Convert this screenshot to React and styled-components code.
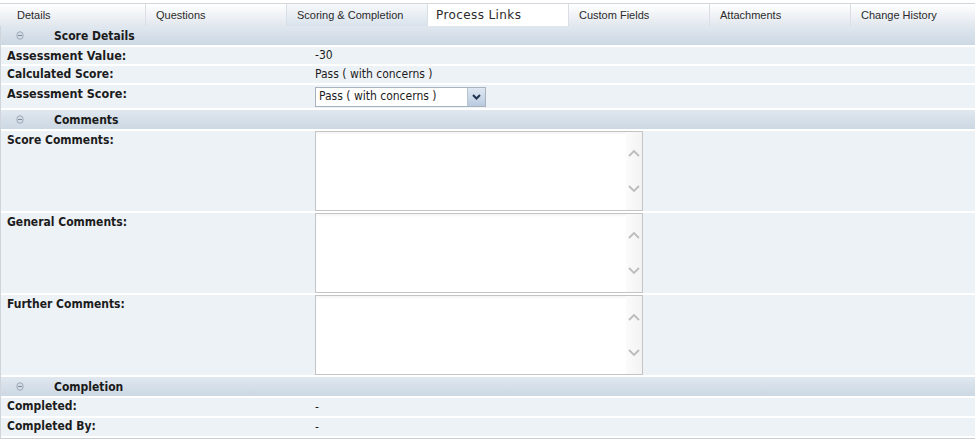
import styled, { createGlobalStyle } from "styled-components";

const GlobalStyle = createGlobalStyle`
  body {
    margin: 0;
    background: #fff;
    font-family: Tahoma, "DejaVu Sans Condensed", "DejaVu Sans", sans-serif;
    color: #1c1c1c;
  }
`;

const tabs = [
  "Details",
  "Questions",
  "Scoring & Completion",
  "Process Links",
  "Custom Fields",
  "Attachments",
  "Change History",
];

const Page = styled.div`
  width: 975px;
  padding-top: 3px;
`;

const TabBar = styled.div`
  display: grid;
  grid-template-columns: 145px repeat(5, 141px) 1fr;
  height: 22px;
  border-top: 1px solid #d3d7db;
`;

const Tab = styled.div`
  display: flex;
  align-items: center;
  padding-left: ${(p) => (p.$first ? "16px" : p.$hover ? "8px" : "10px")};
  border-left: 1px solid ${(p) => (p.$first ? "transparent" : "#d9dfe5")};
  background: ${(p) =>
    p.$active
      ? "linear-gradient(#f7f9fb, #d9e2ec)"
      : p.$hover
      ? "#fff"
      : "linear-gradient(#ffffff, #e1e7ee)"};
  font-family: ${(p) =>
    p.$hover ? 'Tahoma, "DejaVu Sans", sans-serif' : '"Liberation Sans", Arial, sans-serif'};
  font-size: ${(p) => (p.$hover ? "12px" : "11px")};
  letter-spacing: ${(p) => (p.$hover ? "0.4px" : "0")};
  color: #2a2a2a;
  white-space: nowrap;
`;

const Panel = styled.div`
  display: flex;
  flex-direction: column;
  gap: 2px;
  border-left: 1px solid #cfd5db;
  border-bottom: 1px solid #c8ced4;
  padding-bottom: 2px;
`;

const SectionHeader = styled.div`
  height: 19px;
  display: flex;
  align-items: center;
  background: linear-gradient(#e0e7ef, #ccd8e3);
  font-weight: bold;
  font-size: 12px;
  color: #1a1a1a;
`;

const IconWrap = styled.span`
  width: 53px;
  padding-left: 15px;
  box-sizing: border-box;
  display: flex;
  align-items: center;
`;

const Row = styled.div`
  display: grid;
  grid-template-columns: 307px 1fr;
  min-height: ${(p) => p.$h || 17}px;
  background: #edf2f7;
`;

const Label = styled.div`
  padding-left: 6px;
  font-weight: bold;
  font-size: ${(p) => p.$size || 12}px;
  line-height: 17px;
  white-space: nowrap;
  padding-top: ${(p) => p.$top || 0}px;
`;

const Value = styled.div`
  padding-left: 7px;
  font-size: 12px;
  line-height: 17px;
  display: flex;
  align-items: ${(p) => (p.$start ? "flex-start" : "center")};
`;

const Select = styled.div`
  width: 171px;
  height: 20px;
  border: 1px solid #a9b3bd;
  background: #fff;
  display: flex;
  align-items: center;
  justify-content: space-between;
  box-sizing: border-box;
  font-size: 12px;
  padding-left: 3px;
`;

const SelectArrow = styled.span`
  width: 17px;
  height: 18px;
  background: linear-gradient(#dfe8f3, #b9cadf);
  border-left: 1px solid #b7c4d2;
  display: flex;
  align-items: center;
  justify-content: center;
`;

const TextBox = styled.div`
  width: 328px;
  height: 80px;
  border: 1px solid #c4c4c4;
  background: #fff;
  box-sizing: border-box;
  display: flex;
  justify-content: flex-end;
  box-shadow: inset 0 2px 2px rgba(0, 0, 0, 0.04);
`;

const ScrollTrack = styled.div`
  width: 16px;
  background: linear-gradient(90deg, #fbfbfb, #f3f3f3);
  display: flex;
  flex-direction: column;
  justify-content: space-between;
  align-items: center;
  padding: 17px 0 17px;
`;

const CollapseIcon = () => (
  <svg width="8" height="9" viewBox="0 0 8 9">
    <ellipse cx="4" cy="4.5" rx="3.2" ry="3.8" fill="#d3dce6" stroke="#96a3b0" strokeWidth="0.9" />
    <rect x="2" y="4" width="4" height="1" fill="#7d8996" />
  </svg>
);

const Chevron = ({ up }) => (
  <svg width="12" height="8" viewBox="0 0 12 8">
    <path
      d={up ? "M1 7 L6 2 L11 7" : "M1 1 L6 6 L11 1"}
      fill="none"
      stroke="#bcbcbc"
      strokeWidth="1.8"
    />
  </svg>
);

const Section = ({ title }) => (
  <SectionHeader>
    <IconWrap>
      <CollapseIcon />
    </IconWrap>
    {title}
  </SectionHeader>
);

const CommentRow = ({ label }) => (
  <Row $h={80}>
    <Label $top={1}>{label}</Label>
    <Value $start>
      <TextBox>
        <ScrollTrack>
          <Chevron up />
          <Chevron />
        </ScrollTrack>
      </TextBox>
    </Value>
  </Row>
);

const App = () => {
  return (
    <Page>
      <GlobalStyle />
      <TabBar>
        {tabs.map((t, i) => (
          <Tab key={t} $first={i === 0} $active={i === 2} $hover={i === 3}>
            {t}
          </Tab>
        ))}
      </TabBar>
      <Panel>
        <Section title="Score Details" />
        <Row>
          <Label $size={12.5}>Assessment Value:</Label>
          <Value>-30</Value>
        </Row>
        <Row>
          <Label>Calculated Score:</Label>
          <Value>Pass ( with concerns )</Value>
        </Row>
        <Row $h={23}>
          <Label $size={12.5}>Assessment Score:</Label>
          <Value>
            <Select>
              Pass ( with concerns )
              <SelectArrow>
                <svg width="9" height="6" viewBox="0 0 9 6">
                  <path d="M1 1 L4.5 4.5 L8 1" fill="none" stroke="#1f3350" strokeWidth="2" />
                </svg>
              </SelectArrow>
            </Select>
          </Value>
        </Row>
        <Section title="Comments" />
        <CommentRow label="Score Comments:" />
        <CommentRow label="General Comments:" />
        <CommentRow label="Further Comments:" />
        <Section title="Completion" />
        <Row $h={18}>
          <Label>Completed:</Label>
          <Value>-</Value>
        </Row>
        <Row $h={18}>
          <Label>Completed By:</Label>
          <Value>-</Value>
        </Row>
      </Panel>
    </Page>
  );
};

export default App;
